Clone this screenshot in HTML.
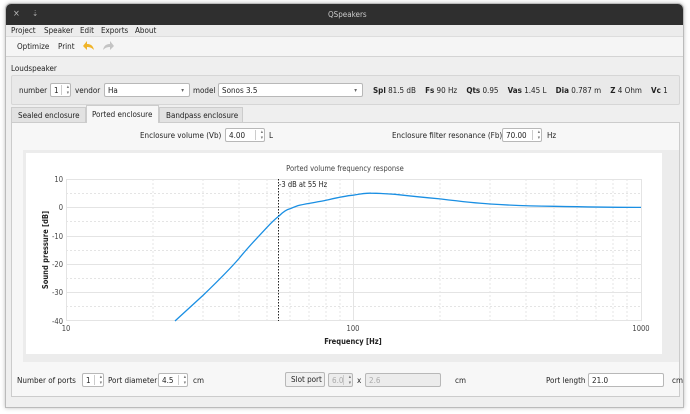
<!DOCTYPE html>
<html><head><meta charset="utf-8"><style>
*{box-sizing:border-box;margin:0;padding:0}
body{width:690px;height:414px;background:#fff;font-family:"DejaVu Sans Condensed","Liberation Sans",sans-serif;font-size:8px;color:#222;position:relative;overflow:hidden}
.a{position:absolute;white-space:nowrap}
.win{left:5px;top:3px;width:679px;height:405px;background:#efefef;border:1px solid #bbb;border-radius:6px 6px 0 0;overflow:hidden;box-shadow:0 0 4px rgba(0,0,0,.25)}
.inp{position:absolute;white-space:nowrap;background:#fff;border:1px solid #b8b8b8;border-radius:2px;height:14px;padding:1px 3px;font-size:8px;line-height:11px}
.dis{background:#ececec;color:#aaa}
.spin::after{content:"";position:absolute;right:8px;top:1px;bottom:1px;border-left:1px solid #ccc}
.sp{position:absolute;right:1px;top:0;font-size:5px;line-height:6px;color:#777}
b{font-weight:bold}
</style></head><body>
<div class="a win">
 <div class="a" style="left:0;top:0;width:679px;height:21px;background:#2f2f2f;color:#ddd">
  <span class="a" style="left:7px;top:5px;font-size:9px;color:#bbb">×</span>
  <span class="a" style="left:26px;top:5px;font-size:8px;color:#aaa">⇣</span>
  <span class="a" style="left:322px;top:6px;font-size:8px;color:#ccc">QSpeakers</span>
 </div>
 <div class="a" style="left:0;top:21px;width:679px;height:12px;background:#ececec;border-bottom:1px solid #ddd;font-size:8px">
  <span class="a" style="left:5px;top:1px">Project</span><span class="a" style="left:38px;top:1px">Speaker</span><span class="a" style="left:74px;top:1px">Edit</span><span class="a" style="left:95px;top:1px">Exports</span><span class="a" style="left:129px;top:1px">About</span>
 </div>
 <div class="a" style="left:0;top:33px;width:679px;height:20px;background:#f5f5f5;border-bottom:1px solid #d4d4d4">
  <span class="a" style="left:11px;top:5px">Optimize</span><span class="a" style="left:52px;top:5px">Print</span>
  <svg class="a" style="left:76px;top:3px" width="14" height="12"><path d="M12 10 C11 5 8 4 5 4 L5 1 L1 6 L5 10 L5 7 C8 7 10 8 12 10Z" fill="#f0b429"/></svg>
  <svg class="a" style="left:95px;top:3px" width="14" height="12"><path d="M2 10 C3 5 6 4 9 4 L9 1 L13 6 L9 10 L9 7 C6 7 4 8 2 10Z" fill="#c4c4c4"/></svg>
 </div>
 <span class="a" style="left:5px;top:60px">Loudspeaker</span>
 <div class="a" style="left:5px;top:71px;width:669px;height:30px;background:#e9e9e9;border:1px solid #d6d6d6;border-radius:2px">
  <span class="a" style="left:7px;top:10px">number</span>
  <div class="inp spin" style="left:38px;top:7px;width:21px">1<span class="sp">▴<br>▾</span></div>
  <span class="a" style="left:63px;top:10px">vendor</span>
  <div class="inp" style="left:92px;top:7px;width:86px">Ha<span class="a" style="right:5px;top:1px;font-size:6px;color:#666">▾</span></div>
  <span class="a" style="left:181px;top:10px">model</span>
  <div class="inp" style="left:206px;top:7px;width:145px">Sonos 3.5<span class="a" style="right:5px;top:1px;font-size:6px;color:#666">▾</span></div>
  <span class="a" style="left:361px;top:10px"><b>Spl</b> 81.5 dB &nbsp;&nbsp;&nbsp;<b>Fs</b> 90 Hz &nbsp;&nbsp;&nbsp;<b>Qts</b> 0.95 &nbsp;&nbsp;&nbsp;<b>Vas</b> 1.45 L &nbsp;&nbsp;&nbsp;<b>Dia</b> 0.787 m &nbsp;&nbsp;&nbsp;<b>Z</b> 4 Ohm &nbsp;&nbsp;&nbsp;<b>Vc</b> 1</span>
 </div>
 <div class="a" style="left:5px;top:103px;width:75px;height:15px;background:#e2e2e2;border:1px solid #ccc;border-bottom:none"><span class="a" style="left:6px;top:3px">Sealed enclosure</span></div>
 <div class="a" style="left:80px;top:101px;width:73px;height:18px;background:#f7f7f7;border:1px solid #ccc;border-bottom:none;z-index:2"><span class="a" style="left:5px;top:4px">Ported enclosure</span></div>
 <div class="a" style="left:153px;top:103px;width:84px;height:15px;background:#e2e2e2;border:1px solid #ccc;border-bottom:none"><span class="a" style="left:6px;top:3px">Bandpass enclosure</span></div>
 <div class="a" style="left:5px;top:118px;width:669px;height:275px;background:#f7f7f7;border:1px solid #ccc">
  <span class="a" style="left:128px;top:8px">Enclosure volume (Vb)</span>
  <div class="inp spin" style="left:213px;top:5px;width:40px">4.00<span class="sp">▴<br>▾</span></div>
  <span class="a" style="left:257px;top:8px">L</span>
  <span class="a" style="left:380px;top:8px">Enclosure filter resonance (Fb)</span>
  <div class="inp spin" style="left:490px;top:5px;width:40px">70.00<span class="sp">▴<br>▾</span></div>
  <span class="a" style="left:535px;top:8px">Hz</span>
  <div class="a" style="left:11px;top:27px;width:656px;height:212px;background:#ececec"></div>
  <span class="a" style="left:5px;top:253px">Number of ports</span>
  <div class="inp spin" style="left:70px;top:250px;width:22px">1<span class="sp">▴<br>▾</span></div>
  <span class="a" style="left:96px;top:253px">Port diameter</span>
  <div class="inp spin" style="left:146px;top:250px;width:30px">4.5<span class="sp">▴<br>▾</span></div>
  <span class="a" style="left:181px;top:253px">cm</span>
  <div class="a" style="left:273px;top:249px;width:40px;height:15px;background:#f0f0f0;border:1px solid #b8b8b8;border-radius:2px"><span class="a" style="left:5px;top:2px">Slot port</span></div>
  <div class="inp spin dis" style="left:316px;top:250px;width:25px">6.0<span class="sp">▴<br>▾</span></div>
  <span class="a" style="left:345px;top:253px">x</span>
  <div class="inp dis" style="left:353px;top:250px;width:76px">2.6</div>
  <span class="a" style="left:443px;top:253px">cm</span>
  <span class="a" style="left:534px;top:253px">Port length</span>
  <div class="inp" style="left:576px;top:250px;width:76px">21.0</div>
  <span class="a" style="left:660px;top:253px">cm</span>
 </div>
</div>
<svg class="a" style="left:0;top:0" width="690" height="414" font-family="DejaVu Sans Condensed,Liberation Sans,sans-serif">
 <rect x="26" y="153" width="636" height="201" fill="#fff"/>
 <text x="345" y="171" font-size="7.5" fill="#444" text-anchor="middle">Ported volume frequency response</text>
 <g stroke="#e4e4e4" stroke-width="1">
  <line x1="66" y1="179.5" x2="641" y2="179.5"/><line x1="66" y1="207.5" x2="641" y2="207.5"/><line x1="66" y1="236.5" x2="641" y2="236.5"/><line x1="66" y1="264.5" x2="641" y2="264.5"/><line x1="66" y1="292.5" x2="641" y2="292.5"/><line x1="66" y1="320.5" x2="641" y2="320.5"/>
  <line x1="66.5" y1="179" x2="66.5" y2="321"/><line x1="353.5" y1="179" x2="353.5" y2="321"/><line x1="641.5" y1="179" x2="641.5" y2="321"/>
 </g>
 <g stroke="#e4e4e4" stroke-width="1" stroke-dasharray="2,2">
  <line x1="66" y1="193.5" x2="641" y2="193.5"/><line x1="66" y1="221.5" x2="641" y2="221.5"/><line x1="66" y1="250.5" x2="641" y2="250.5"/><line x1="66" y1="278.5" x2="641" y2="278.5"/><line x1="66" y1="306.5" x2="641" y2="306.5"/>
  <line x1="153" y1="179" x2="153" y2="321"/><line x1="203" y1="179" x2="203" y2="321"/><line x1="239" y1="179" x2="239" y2="321"/><line x1="267" y1="179" x2="267" y2="321"/><line x1="290" y1="179" x2="290" y2="321"/><line x1="309" y1="179" x2="309" y2="321"/><line x1="326" y1="179" x2="326" y2="321"/><line x1="340" y1="179" x2="340" y2="321"/>
  <line x1="440" y1="179" x2="440" y2="321"/><line x1="490" y1="179" x2="490" y2="321"/><line x1="526" y1="179" x2="526" y2="321"/><line x1="554" y1="179" x2="554" y2="321"/><line x1="577" y1="179" x2="577" y2="321"/><line x1="596" y1="179" x2="596" y2="321"/><line x1="613" y1="179" x2="613" y2="321"/><line x1="627" y1="179" x2="627" y2="321"/>
 </g>
 <line x1="278.5" y1="179" x2="278.5" y2="321" stroke="#222" stroke-dasharray="1.5,1.5"/>
 <text x="279" y="187" font-size="7.5" fill="#222">-3 dB at 55 Hz</text>
 <path d="M175 321 L203 295.4 C220 279 230 269 239 258.5 C250 245 260 235 267 227.3 C272 222 275 219 279 216 C283 212 287 209.5 290 208.8 C294 207 297 205.8 300 205.1 C310 203 318 202 326 200.3 C336 198 344 196 353 195.2 C360 194 365 193 371 193.2 C380 193.3 388 193.8 395 194.3 C410 196 425 197.5 440 198.9 C457 201 473 203 490 204 C510 205.3 530 206 554 206.3 C580 206.8 610 207.3 641 207.4" fill="none" stroke="#1a8fe3" stroke-width="1.3"/>
 <g font-size="7.5" fill="#444" text-anchor="end">
  <text x="63" y="182">10</text><text x="63" y="210">0</text><text x="63" y="239">-10</text><text x="63" y="267">-20</text><text x="63" y="295">-30</text><text x="63" y="324">-40</text>
 </g>
 <g font-size="7.5" fill="#444" text-anchor="middle">
  <text x="66" y="331">10</text><text x="353" y="331">100</text><text x="641" y="331">1000</text>
 </g>
 <text x="353" y="344" font-size="7.5" font-weight="bold" fill="#222" text-anchor="middle">Frequency [Hz]</text>
 <text transform="translate(48,250) rotate(-90)" font-size="7.5" font-weight="bold" fill="#222" text-anchor="middle">Sound pressure [dB]</text>
</svg>
</body></html>
